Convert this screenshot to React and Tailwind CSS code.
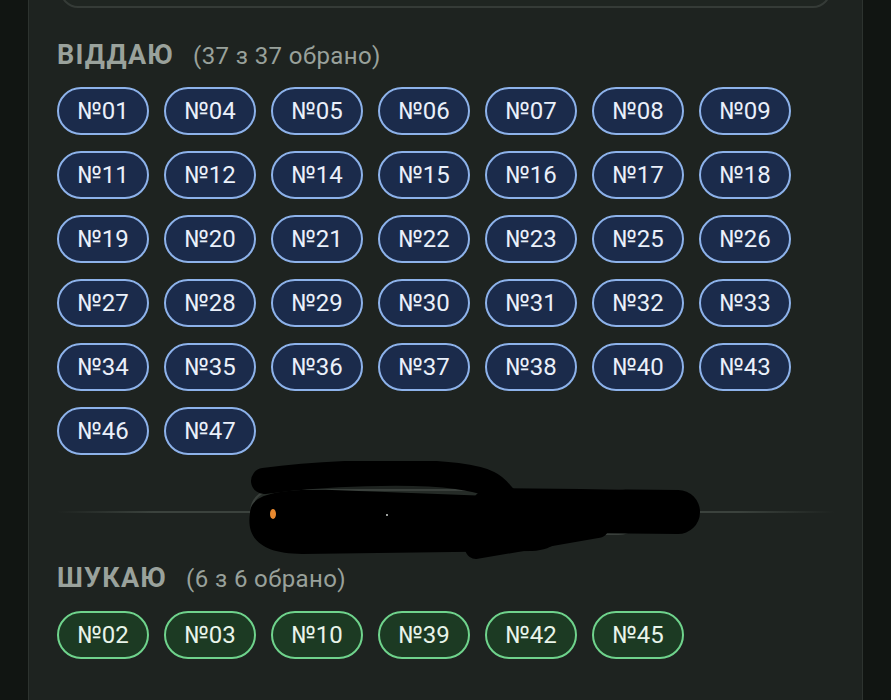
import React from 'react';

const giving = ['01', '04', '05', '06', '07', '08', '09', '11', '12', '14', '15', '16', '17', '18', '19', '20', '21', '22', '23', '25', '26', '27', '28', '29', '30', '31', '32', '33', '34', '35', '36', '37', '38', '40', '43', '46', '47'];
const seeking = ['02', '03', '10', '39', '42', '45'];

const Chip = ({ num, tone }) => {
    const styles = tone === 'green'
        ? 'bg-[#1c3a23] border-[#6fd38c] text-[#e8f4ea]'
        : 'bg-[#1b2b4b] border-[#8db2ea] text-[#eaf0fa]';
    return (
        <div className={`w-[92px] h-[48px] rounded-full border-2 flex items-center justify-center text-[24px] leading-none ${styles}`}>
            №{num}
        </div>
    );
};

const SectionTitle = ({ title, count }) => (
    <div className="flex items-baseline gap-[19px] h-[32px] leading-[32px]">
        <span className="text-[27px] font-bold tracking-[1.2px] text-[#9aa29c]">{title}</span>
        <span className="text-[24px] tracking-[0.4px] text-[#99a19b]">({count} з {count} обрано)</span>
    </div>
);

// hand-drawn black marker over the middle button
const Scribble = () => (
    <svg className="absolute left-[185px] top-[-28px]" width="460" height="100" viewBox="0 0 460 100">
        <path d="M8 52 C 8 32, 40 28, 90 29 L 300 37 C 334 44, 334 88, 290 90 L 60 93 C 18 93, 4 76, 8 52 Z" fill="#000" />
        <path d="M22 20 C 80 12, 170 9, 215 15 S 252 30, 266 40" stroke="#000" strokeWidth="26" strokeLinecap="round" fill="none" />
        <path d="M250 49 L 436 51" stroke="#000" strokeWidth="44" strokeLinecap="round" fill="none" />
        <path d="M234 87 L 356 66" stroke="#000" strokeWidth="22" strokeLinecap="round" fill="none" />
        <ellipse cx="31" cy="53" rx="3" ry="5" fill="#e8892f" />
        <circle cx="145" cy="54" r="1" fill="#cfd4d0" />
    </svg>
);

export default function App() {
    return (
        <div className="min-h-[700px] h-[700px] overflow-hidden bg-[#111512] flex font-['Roboto',sans-serif]">
            <div className="ml-[28px] w-[835px] border-x border-[#2d332f] bg-[#1e2320] px-[28px]">
                {/* bottom edge of the card above */}
                <div className="mt-[-40px] mx-[3px] h-[48px] rounded-[18px] border-2 border-[#353b37] bg-[#1f2521]" />

                <div className="mt-[31px]">
                    <SectionTitle title="ВІДДАЮ" count={37} />
                </div>
                <div className="mt-[16px] flex flex-wrap gap-x-[15px] gap-y-[16px] w-[760px]">
                    {giving.map((n) => <Chip key={n} num={n} tone="blue" />)}
                </div>

                <div className="relative mt-[34px] flex items-center">
                    <div className="flex-1 h-[2px] bg-gradient-to-r from-transparent via-[#3b423d] to-[#3b423d]" />
                    <div className="w-[392px] h-[46px] rounded-full border-2 border-[#3a403c] bg-[#252b27]" />
                    <div className="flex-1 h-[2px] bg-gradient-to-r from-[#3b423d] via-[#3b423d] to-transparent" />
                    <Scribble />
                </div>

                <div className="mt-[27px]">
                    <SectionTitle title="ШУКАЮ" count={6} />
                </div>
                <div className="mt-[17px] flex flex-wrap gap-x-[15px] gap-y-[16px] w-[760px]">
                    {seeking.map((n) => <Chip key={n} num={n} tone="green" />)}
                </div>
            </div>
        </div>
    );
}
